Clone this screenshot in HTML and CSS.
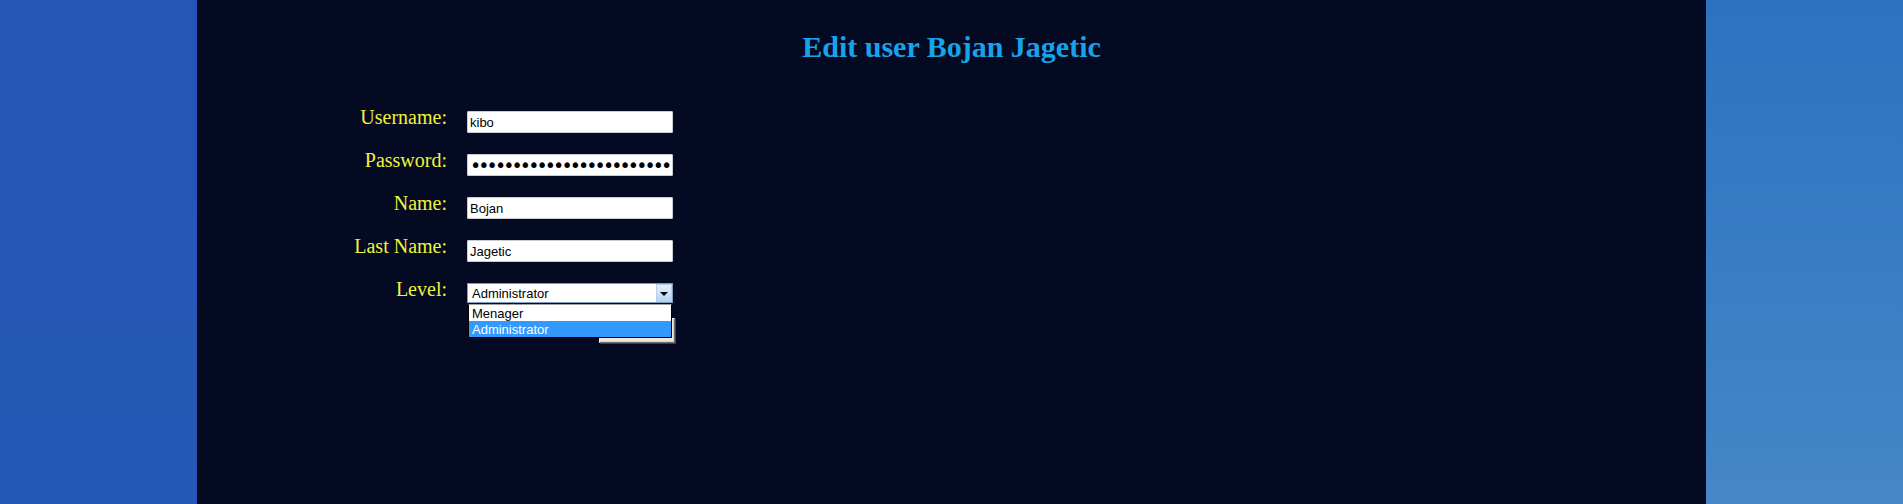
FILE: index.html
```html
<!DOCTYPE html>
<html lang="en">
<head>
<meta charset="utf-8">
<title>Edit user</title>
<link rel="stylesheet" href="styles.css">
</head>
<body>
<div class="page">
  <h1 class="title">Edit user Bojan Jagetic</h1>
  <form class="edit-form">
    <label class="field-label" for="username">Username:</label>
    <input class="field-input" id="username" type="text" value="kibo">

    <label class="field-label" for="password">Password:</label>
    <input class="field-input password" id="password" type="password" value="abcdefghijklmnopqrstuvwx">

    <label class="field-label" for="name">Name:</label>
    <input class="field-input" id="name" type="text" value="Bojan">

    <label class="field-label" for="lastname">Last Name:</label>
    <input class="field-input" id="lastname" type="text" value="Jagetic">

    <label class="field-label">Level:</label>
    <div class="select-wrap">
      <div class="select">
        <span class="select-value">Administrator</span>
        <span class="select-btn"><span class="arrow"></span></span>
      </div>
      <ul class="dropdown">
        <li class="option">Menager</li>
        <li class="option selected">Administrator</li>
      </ul>
    </div>

    <span class="spacer"></span>
    <button class="submit" type="button">Save</button>
  </form>
</div>
</body>
</html>
```

FILE: styles.css
```css
html, body {
  margin: 0;
  padding: 0;
}

body {
  min-height: 504px;
  background:
    linear-gradient(#2555b5, #2558b6) left top / 50% 100% no-repeat,
    linear-gradient(#2b73c0, #4587c7) right top / 50% 100% no-repeat;
  font-family: "Liberation Serif", serif;
}

.page {
  width: 1509px;
  min-height: 504px;
  margin: 0 auto;
  background: #030a22;
  box-sizing: border-box;
  padding-top: 30px;
}

.title {
  margin: 0;
  text-align: center;
  font-family: "Liberation Serif", serif;
  font-weight: bold;
  font-size: 30px;
  line-height: 34px;
  color: #17a2ea;
}

.edit-form {
  display: grid;
  grid-template-columns: 100px 206px;
  grid-auto-rows: 43px;
  column-gap: 20px;
  margin: 42px 0 0 150px;
}

.field-label {
  text-align: right;
  font-size: 20px;
  line-height: 23px;
  color: #f2f23c;
}

.field-input {
  margin: 5px 0 0 0;
  width: 206px;
  height: 22px;
  box-sizing: border-box;
  border: 1px solid #c9ccd2;
  border-radius: 1px;
  padding: 0 2px;
  background: #fff;
  font-family: "Liberation Sans", sans-serif;
  font-size: 13px;
  color: #000;
  outline: none;
}

.field-input.password {
  font-family: "DejaVu Sans", sans-serif;
  font-size: 19px;
  letter-spacing: -2.9px;
  padding-left: 2px;
}

.select-wrap {
  position: relative;
  margin-top: 5px;
  width: 206px;
  height: 20px;
  z-index: 2;
}

.select {
  display: flex;
  align-items: stretch;
  height: 20px;
  box-sizing: border-box;
  border: 1px solid #7f9db9;
  background: #fff;
  font-family: "Liberation Sans", sans-serif;
  font-size: 13px;
}

.select-value {
  flex: 1;
  padding-left: 4px;
  line-height: 19px;
  color: #000;
}

.select-btn {
  width: 16px;
  box-sizing: border-box;
  border: 1px solid #b9cee9;
  background: linear-gradient(#e3f0fd, #b5d6f6);
  display: flex;
  align-items: center;
  justify-content: center;
}

.arrow {
  width: 0;
  height: 0;
  border-left: 4px solid transparent;
  border-right: 4px solid transparent;
  border-top: 4px solid #000;
  margin-top: 1px;
}

.dropdown {
  position: absolute;
  top: 21px;
  left: 1px;
  right: 1px;
  margin: 0;
  padding: 0;
  list-style: none;
  background: #fff;
  border: 1px solid #000;
  border-top-color: #a0a0a0;
  font-family: "Liberation Sans", sans-serif;
  font-size: 13px;
}

.option {
  height: 16px;
  line-height: 17px;
  padding-left: 3px;
  color: #000;
}

.option.selected {
  background: #3399ff;
  color: #fff;
}

.submit {
  justify-self: end;
  align-self: start;
  margin: -3px -2px 0 0;
  width: 76px;
  height: 25px;
  box-sizing: border-box;
  border: 1px solid #6f6f6f;
  border-top-color: #fff;
  border-left-color: #fff;
  box-shadow: inset -1px -1px 0 #d4d0c8, 1px 1px 0 #404040;
  background: #ece9d8;
  font-family: "Liberation Sans", sans-serif;
  font-size: 13px;
  z-index: 1;
}
```
